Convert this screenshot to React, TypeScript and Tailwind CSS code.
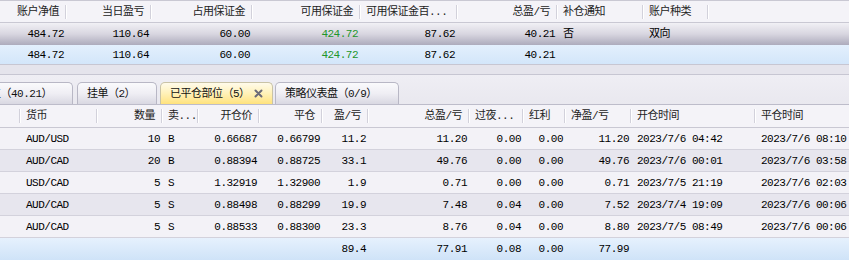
import React from "react";

type Col = {
  label: string;
  w: string;
  head: "left" | "right";
  data: "left" | "right";
};

const topCols: Col[] = [
  { label: "账户净值", w: "w-[66px]", head: "right", data: "right" },
  { label: "当日盈亏", w: "w-[85px]", head: "right", data: "right" },
  { label: "占用保证金", w: "w-[101px]", head: "right", data: "right" },
  { label: "可用保证金", w: "w-[108px]", head: "right", data: "right" },
  { label: "可用保证金百...", w: "w-[97px]", head: "left", data: "right" },
  { label: "总盈/亏", w: "w-[100px]", head: "right", data: "right" },
  { label: "补仓通知", w: "w-[86px]", head: "left", data: "left" },
  { label: "账户种类", w: "w-[65px]", head: "left", data: "left" },
];

const topRow = ["484.72", "110.64", "60.00", "424.72", "87.62", "40.21", "否", "双向"];
const topRow2 = ["484.72", "110.64", "60.00", "424.72", "87.62", "40.21", "", ""];

const cols: Col[] = [
  { label: "", w: "w-[20px]", head: "left", data: "left" },
  { label: "货币", w: "w-[77px]", head: "left", data: "left" },
  { label: "数量", w: "w-[65px]", head: "right", data: "right" },
  { label: "卖...", w: "w-[36px]", head: "left", data: "left" },
  { label: "开仓价", w: "w-[61px]", head: "right", data: "right" },
  { label: "平仓", w: "w-[63px]", head: "right", data: "right" },
  { label: "盈/亏", w: "w-[46px]", head: "right", data: "right" },
  { label: "总盈/亏", w: "w-[101px]", head: "right", data: "right" },
  { label: "过夜...", w: "w-[54px]", head: "left", data: "right" },
  { label: "红利", w: "w-[42px]", head: "left", data: "right" },
  { label: "净盈/亏", w: "w-[66px]", head: "left", data: "right" },
  { label: "开仓时间", w: "w-[124px]", head: "left", data: "left" },
  { label: "平仓时间", w: "w-[110px]", head: "left", data: "left" },
];

const rows: string[][] = [
  ["", "AUD/USD", "10", "B", "0.66687", "0.66799", "11.2", "11.20", "0.00", "0.00", "11.20", "2023/7/6 04:42", "2023/7/6 08:10"],
  ["", "AUD/CAD", "20", "B", "0.88394", "0.88725", "33.1", "49.76", "0.00", "0.00", "49.76", "2023/7/6 00:01", "2023/7/6 03:58"],
  ["", "USD/CAD", "5", "S", "1.32919", "1.32900", "1.9", "0.71", "0.00", "0.00", "0.71", "2023/7/5 21:19", "2023/7/6 02:03"],
  ["", "AUD/CAD", "5", "S", "0.88498", "0.88299", "19.9", "7.48", "0.04", "0.00", "7.52", "2023/7/4 19:09", "2023/7/6 00:06"],
  ["", "AUD/CAD", "5", "S", "0.88533", "0.88300", "23.3", "8.76", "0.04", "0.00", "8.80", "2023/7/5 08:49", "2023/7/6 00:06"],
];

const totals = ["", "", "", "", "", "", "89.4", "77.91", "0.08", "0.00", "77.99", "", ""];

const HeadCell = ({ col }: { col: Col }) => (
  <div className={`${col.w} shrink-0 flex items-center h-full`}>
    <div
      className={`flex-1 overflow-hidden whitespace-nowrap leading-[16px] ${
        col.head === "right" ? "text-right pr-[6px]" : "text-left pl-[6px]"
      }`}
    >
      {col.label}
    </div>
    <div className="w-px h-[14px] bg-[#d2d1db] shadow-[1px_0_0_#ffffff]" />
  </div>
);

const DataCell = ({ col, value, green }: { col: Col; value: string; green?: boolean }) => (
  <div
    className={`${col.w} shrink-0 whitespace-nowrap leading-[16px] ${
      col.data === "right" ? "text-right pr-[2px]" : "text-left pl-[6px]"
    } ${green ? "text-[#21962b]" : "text-black"}`}
  >
    {value}
  </div>
);

const Tab = ({
  label,
  w,
  active,
  closable,
  className = "",
}: {
  label: string;
  w: string;
  active?: boolean;
  closable?: boolean;
  className?: string;
}) => (
  <div
    className={`${w} ${className} shrink-0 h-[22px] flex items-center whitespace-nowrap rounded-t-[5px] border border-b-0 leading-[16px] ${
      active
        ? "bg-linear-to-b from-[#fffbea] via-[#fff1b8] to-[#ffe27c] border-[#c9c3a6]"
        : "bg-linear-to-b from-[#fafafc] via-[#efeef4] to-[#d9d8e2] border-[#b8b7c5]"
    }`}
  >
    <span className="pl-[9px] text-[#111]">{label}</span>
    {closable && (
      <svg width="9" height="9" viewBox="0 0 9 9" className="ml-auto mr-[9px]">
        <path d="M1.5 1.5 L7.5 7.5 M7.5 1.5 L1.5 7.5" stroke="#6b6a78" strokeWidth="2" strokeLinecap="round" />
      </svg>
    )}
  </div>
);

export default function App() {
  return (
    <div className="w-[849px] h-[260px] overflow-hidden bg-[#f3f2f7] text-[11px] leading-none tracking-[-0.5px] font-['Liberation_Mono','Noto_Sans_CJK_SC',monospace]">
      {/* account summary grid */}
      <div className="flex h-[23px] bg-[#f4f3f8] border-t border-b border-[#c9c8d3] text-[#222]">
        {topCols.map((c) => (
          <HeadCell key={c.label} col={c} />
        ))}
      </div>
      <div className="flex items-center h-[22px] bg-linear-to-b from-[#f1f0f5] via-[#d8d6e0] to-[#adabbc]">
        {topCols.map((c, i) => (
          <DataCell key={c.label} col={c} value={topRow[i]} green={i === 3} />
        ))}
      </div>
      <div className="flex items-center h-[19px] bg-linear-to-b from-[#e3effd] to-[#d3e6fa]">
        {topCols.map((c, i) => (
          <DataCell key={c.label} col={c} value={topRow2[i]} green={i === 3} />
        ))}
      </div>
      <div className="h-[11px] bg-[#e5e4ec] border-t border-b border-[#c7c6d2]" />

      {/* tabs */}
      <div className="h-[30px] flex items-end gap-[3px] bg-linear-to-b from-[#efeef4] to-[#e9e8ef] border-b border-[#bdbcca] overflow-hidden">
        <Tab label="持仓部位（40.21）" w="w-[140px]" className="-ml-[67px] justify-end pr-[20px]" />
        <Tab label="挂单（2）" w="w-[80px]" className="ml-[1px]" />
        <Tab label="已平仓部位（5）" w="w-[113px]" active closable />
        <Tab label="策略仪表盘（0/9）" w="w-[124px]" className="-ml-[1px]" />
      </div>

      {/* closed positions table */}
      <div className="flex h-[23px] bg-[#f4f3f8] border-b border-[#c9c8d3] text-[#222]">
        {cols.map((c, i) => (
          <HeadCell key={i} col={c} />
        ))}
      </div>
      {rows.map((r, ri) => (
        <div
          key={ri}
          className={`flex items-center h-[22px] border-b border-[#d3d2dc] ${
            ri % 2 === 0 ? "bg-[#f3f2f7]" : "bg-[#e7e6ee]"
          }`}
        >
          {cols.map((c, i) => (
            <DataCell key={i} col={c} value={r[i]} />
          ))}
        </div>
      ))}
      <div className="flex items-center h-[22px] bg-linear-to-b from-[#e6f1fd] to-[#cfe3f8]">
        {cols.map((c, i) => (
          <DataCell key={i} col={c} value={totals[i]} />
        ))}
      </div>
    </div>
  );
}
